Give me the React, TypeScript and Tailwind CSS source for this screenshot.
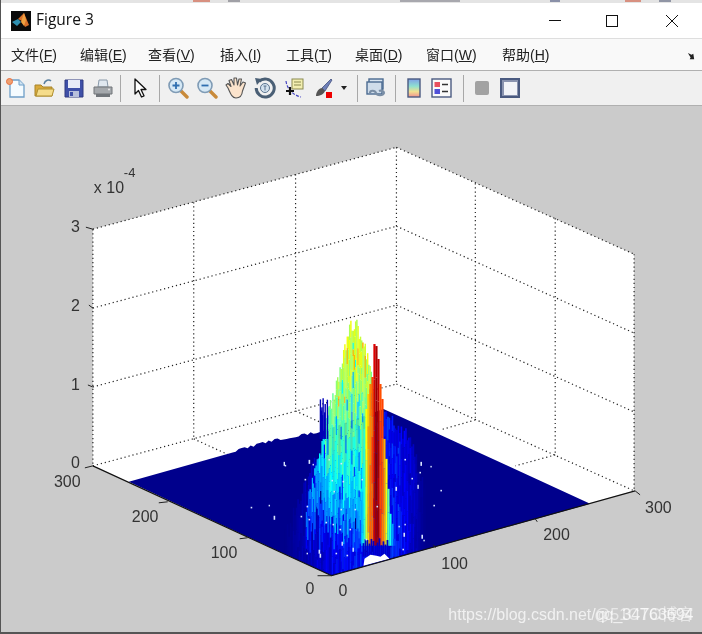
import React from "react";

let seed = 12345;
const rnd = () => {
  seed = (seed * 1664525 + 1013904223) % 4294967296;
  return seed / 4294967296;
};

const jet = (t0: number) => {
  const t = Math.max(0, Math.min(1, t0));
  const c = (v: number) => Math.round(255 * Math.max(0, Math.min(1, v)));
  const r = 1.5 - Math.abs(4 * t - 3);
  const g = 1.5 - Math.abs(4 * t - 2);
  const b = 1.5 - Math.abs(4 * t - 1);
  return `rgb(${c(r)},${c(g)},${c(b)})`;
};

const lerp = (pts: number[][], x: number) => {
  if (x <= pts[0][0]) return pts[0][1];
  for (let i = 1; i < pts.length; i++) {
    if (x <= pts[i][0]) {
      const [a, b] = pts[i - 1];
      const [c, d] = pts[i];
      return b + ((d - b) * (x - a)) / (c - a);
    }
  }
  return pts[pts.length - 1][1];
};

const frontEdge = (x: number) =>
  x < 331 ? 467 + (x - 92) * 0.46 : 577 - (x - 331) * 0.28;

type Seg = { x: number; y1: number; y2: number; c: string; w: number };
const buildSegs = () => {
  const segs: Seg[] = [];
  const glowTop = [[285, 530], [300, 490], [312, 462], [322, 445], [345, 430], [383, 410], [400, 420], [412, 440], [424, 475]];
  for (let x = 284; x < 426; x += 1.5) {
    const top = lerp(glowTop, x) + rnd() * 18;
    const bot = frontEdge(x) - 1;
    const fade = x < 350 ? (x - 284) / 66 : x > 398 ? (426 - x) / 28 : 1;
    let y = top;
    while (y < bot) {
      const len = 6 + rnd() * 22;
      const t = 0.01 + fade * (0.08 + rnd() * 0.1);
      segs.push({ x, y1: y, y2: Math.min(y + len, bot), c: jet(t), w: 1.6 });
      y += len;
    }
  }
  const bodyTop = [[306, 500], [313, 470], [320, 445], [327, 410], [337, 377], [345, 340], [350, 318], [353, 325], [356, 317], [360, 335], [363, 330], [366, 350], [370, 363], [374, 390]];
  const colY = [[317, 0.6], [360, 0.56], [400, 0.5], [440, 0.44], [480, 0.36], [520, 0.25], [560, 0.12]];
  for (let x = 306; x < 374; x += 1.2) {
    let y = lerp(bodyTop, x) + rnd() * 14;
    const bot = x < 352 ? 505 + rnd() * 50 : 553;
    while (y < bot) {
      const len = 5 + rnd() * 20;
      let t = lerp(colY, y) + (rnd() - 0.5) * 0.1;
      if (y < 400 && rnd() < 0.06) t = 0.7;
      if (x < 325) t -= 0.08;
      if (rnd() < 0.06) t -= 0.2;
      segs.push({ x, y1: y, y2: Math.min(y + len, bot), c: jet(t), w: 1.5 });
      y += len;
    }
  }
  for (let i = 0; i < 10; i++) {
    const x = 319 + rnd() * 9;
    segs.push({ x, y1: 397 + rnd() * 22, y2: 440, c: "#0000b8", w: 1.4 });
  }
  const ridge = [[362, 470, 0.34], [364, 430, 0.42], [366, 410, 0.6], [368, 395, 0.7], [370, 385, 0.76], [372, 378, 0.8], [374, 345, 0.92], [376, 347, 0.98], [378, 360, 0.95], [380, 385, 0.82], [382, 400, 0.78], [384, 440, 0.72], [386, 460, 0.6], [388, 490, 0.46], [390, 515, 0.38], [392, 525, 0.3], [394, 540, 0.2]];
  for (const [x, top, t] of ridge) {
    let y = top;
    while (y < 547) {
      const len = 18 + rnd() * 40;
      segs.push({ x, y1: y, y2: Math.min(y + len, 547), c: jet(t + (rnd() - 0.5) * 0.06), w: 2.2 });
      y += len;
    }
  }
  for (let x = 363; x < 391; x += 2) {
    segs.push({ x, y1: 538 + rnd() * 10, y2: 558, c: "#0000c8", w: 1.8 });
  }
  return segs;
};
const SEGS = buildSegs();

const DOTS = [
  [283, 463], [284, 466], [250, 508], [268, 506], [273, 517], [306, 507], [333, 492], [308, 520], [318, 551], [306, 554], [335, 554], [346, 556], [352, 549], [340, 464], [304, 480], [312, 465], [308, 461], [325, 523], [331, 481], [404, 460], [420, 463], [430, 467], [419, 473], [411, 479], [417, 486], [440, 491], [433, 506], [404, 525], [421, 536], [402, 550], [423, 541], [376, 507], [403, 534], [340, 510], [339, 530], [332, 525], [341, 543], [300, 517], [342, 482], [328, 460], [319, 555], [349, 530], [354, 510], [398, 527], [395, 488], [361, 480], [365, 540],
];

const GRID = [
  "M92 230 L396 148", "M92 309 L396 227", "M92 388 L396 306", "M92 467 L396 385",
  "M396 148 L634 255", "M396 227 L634 334", "M396 306 L634 413", "M396 385 L634 492",
  "M92 230 L92 467", "M193 203 L193 440", "M295 175 L295 412", "M396 148 L396 385",
  "M475 184 L475 421", "M555 219 L555 456", "M634 255 L634 492",
  "M193 440 L252 467", "M295 412 L330 428", "M475 421 L440 431", "M555 456 L515 467",
];

const EDGE_PTS = (() => {
  const pts: string[] = ["128,483"];
  for (let x = 232; x < 318; x += 3) {
    const base = x < 270 ? 483 - (x - 128) * 0.282 : 443 - (x - 270) * 0.19;
    pts.push(`${x},${(base - (rnd() < 0.4 ? 2 : 0)).toFixed(1)}`);
  }
  return pts.join(" ");
})();

const Label = ({ x, y, children, size = 16 }: { x: number; y: number; children: React.ReactNode; size?: number }) => (
  <text x={x} y={y} fontSize={size} fill="#333" fontFamily="'Liberation Sans', Arial, sans-serif">{children}</text>
);

const Plot = () => (
  <svg viewBox="0 107 702 525" className="block h-[525px] w-[701px]">
    <polygon points="92,230 396,148 634,255 634,492 331,577 92,467" fill="#ffffff" />
    {GRID.map((d) => (
      <path key={d} d={d} stroke="#222" strokeWidth="1.2" strokeDasharray="1.2 2.9" fill="none" />
    ))}
    <polygon points={`${EDGE_PTS} 383,410 427,430 590,505 331,577`} fill="#00008c" />
    {SEGS.map((s, i) => (
      <line key={i} x1={s.x} x2={s.x} y1={s.y1} y2={s.y2} stroke={s.c} strokeWidth={s.w} />
    ))}
    <polygon points="363,567 389,560 384,555 380,558 376,557 370,556 364,560" fill="#ffffff" />
    {DOTS.map(([x, y], i) => (
      <rect key={i} x={x} y={y} width={i % 3 === 0 ? 1.4 : 1.6} height={i % 4 === 0 ? 4 : 1.6} fill="#d8e4ff" />
    ))}
    <path d="M92 467 L331 577 L635 492" stroke="#111" strokeWidth="1.2" fill="none" />
    <path d="M331 577 L317 577 M167 503 L158 504 M247 539 L239 540 M92 467 L84 469 M435 549 L433 546 M537 523 L535 520 M635 492 L640 496 M92 388 L87 386 M92 309 L88 306 M92 230 L85 228" stroke="#222" strokeWidth="1" fill="none" />
    <Label x={93} y={194}>x 10</Label>
    <Label x={123} y={178} size={13}>-4</Label>
    <Label x={70} y={233}>3</Label>
    <Label x={70} y={312}>2</Label>
    <Label x={70} y={391}>1</Label>
    <Label x={70} y={469}>0</Label>
    <Label x={53} y={488}>300</Label>
    <Label x={131} y={523}>200</Label>
    <Label x={210} y={559}>100</Label>
    <Label x={305} y={595}>0</Label>
    <Label x={338} y={597}>0</Label>
    <Label x={441} y={570}>100</Label>
    <Label x={543} y={541}>200</Label>
    <Label x={645} y={514}>300</Label>
    <text x={448} y={621} fontSize={16} fill="#fff" opacity={0.72} fontFamily="'Liberation Sans', sans-serif">https://blog.csdn.net/qq_34763694</text>
    <text x={594} y={621} fontSize={16} fill="#fff" opacity={0.55} fontFamily="'Liberation Sans', 'Noto Sans CJK SC', sans-serif">@51CTO博客</text>
  </svg>
);

const Ic = ({ className, children }: { className: string; children: React.ReactNode }) => (
  <svg viewBox="0 0 22 22" className={`block h-[22px] w-[22px] shrink-0 ${className}`}>{children}</svg>
);

const Sep = ({ className }: { className: string }) => <div className={`h-[27px] w-px shrink-0 bg-[#a8a8a8] ${className}`} />;

const Lens = ({ sign }: { sign: "+" | "-" }) => (
  <>
    <path d="M13 13 L20 20" stroke="#c88a3a" strokeWidth="3.4" strokeLinecap="round" />
    <circle cx="9" cy="8.5" r="7" fill="#d5e8f5" stroke="#7f9bb5" strokeWidth="1.6" />
    <path d={sign === "+" ? "M5.5 8.5H12.5M9 5V12" : "M5.5 8.5H12.5"} stroke="#2f6fb0" strokeWidth="1.8" />
  </>
);

const MENU: [string, string][] = [
  ["文件", "F"], ["编辑", "E"], ["查看", "V"], ["插入", "I"], ["工具", "T"], ["桌面", "D"], ["窗口", "W"], ["帮助", "H"],
];

const MENU_W = ["w-[69px]", "w-[68px]", "w-[72px]", "w-[66px]", "w-[69px]", "w-[71px]", "w-[76px]", "w-[60px]"];

export default function App() {
  return (
    <div className="flex h-[634px] w-[702px] flex-col overflow-hidden border-l border-[#555] bg-white blur-[0.4px]" style={{ fontFamily: "'Liberation Sans', 'Noto Sans CJK SC', sans-serif" }}>
      {/* sliver of the window behind */}
      <div className="flex h-[3px] shrink-0 items-start bg-[#e4e4e4]">
        <div className="ml-[192px] h-[2px] w-[17px] bg-[#d89080]" />
        <div className="ml-[18px] h-[2px] w-[12px] bg-[#a0a0a6]" />
        <div className="ml-[160px] h-[2px] w-[60px] bg-[#a8a8ae]" />
        <div className="ml-[90px] h-[2px] w-[10px] bg-[#8a90a8]" />
        <div className="ml-[65px] h-[2px] w-[16px] bg-[#d89080]" />
        <div className="ml-[18px] h-[2px] w-[12px] bg-[#9095a5]" />
      </div>

      {/* title bar */}
      <div className="flex h-[36px] shrink-0 items-center border-b border-[#dedede] bg-white">
        <svg viewBox="0 0 20 20" className="ml-[10px] h-[20px] w-[20px] shrink-0">
          <rect width="20" height="20" fill="#0a0a0a" />
          <path d="M1 11 L7 8 L10 11 L6 15Z" fill="#2f8fb0" />
          <path d="M7 8 L13 2 L18 14 L14 16 L11 10Z" fill="#d9702a" />
          <path d="M13 2 L15 9 L13 15 L10 11Z" fill="#f0a040" />
        </svg>
        <span className="mb-[1px] ml-[5px] text-[15.5px] text-[#111]" style={{ fontFamily: "'Open Sans', sans-serif" }}>Figure 3</span>
        <div className="ml-auto mr-[24px] flex items-center">
          <div className="h-px w-[12px] bg-[#111]" />
          <div className="ml-[45px] h-[12px] w-[12px] border border-[#111]" />
          <svg viewBox="0 0 12 12" className="ml-[48px] h-[12px] w-[12px]"><path d="M0 0L12 12M12 0L0 12" stroke="#111" strokeWidth="1" /></svg>
        </div>
      </div>

      {/* menu bar */}
      <div className="flex h-[31px] shrink-0 items-center bg-[#f9f9f9] pl-[10px] pt-[1px] text-[14px] text-[#222]">
        {MENU.map(([t, k], i) => (
          <span key={k} className={`${MENU_W[i]} whitespace-nowrap`}>{t}(<span className="underline">{k}</span>)</span>
        ))}
        <svg viewBox="0 0 10 10" className="ml-auto mr-[6px] mt-[2px] h-[9px] w-[9px]"><path d="M1 1 L5 3 L7 2 L8 8 L3 8 L4 6 Z" fill="#222" /></svg>
      </div>

      {/* toolbar */}
      <div className="flex h-[36px] shrink-0 items-center border-y border-[#b0b0b0] bg-[#f0f0f0] pl-[3px]">
        <Ic className="ml-[1px]">
          <path d="M5 3H14L19 8V20H5Z" fill="#f4fbff" stroke="#6f9fc8" strokeWidth="1.3" />
          <path d="M14 3V8H19" fill="#cfe3f2" stroke="#6f9fc8" />
          <circle cx="4.5" cy="4.5" r="3" fill="#f0a070" stroke="#e87040" />
        </Ic>
        <Ic className="ml-[6px]">
          <path d="M2 19V8H8L10 10H19V19Z" fill="#d8a93c" stroke="#a88428" />
          <path d="M3 19L5 12H21L19 19Z" fill="#f5dc8a" stroke="#b09030" />
          <path d="M11 7C12 3 16 2 18 4" stroke="#5a7f9f" strokeWidth="1.5" fill="none" />
        </Ic>
        <Ic className="ml-[8px]">
          <path d="M2 3H20V20H2Z" fill="#3f50a8" stroke="#303a80" />
          <rect x="5" y="3" width="12" height="8" fill="#e8ecf8" />
          <rect x="6" y="14" width="10" height="6" fill="#b8c0dc" />
          <rect x="7" y="15" width="3" height="4" fill="#3f50a8" />
        </Ic>
        <Ic className="ml-[7px]">
          <path d="M7 3H15L16 10H6Z" fill="#e0e8f0" stroke="#8a9aaa" />
          <path d="M2 10H20V17H2Z" fill="#a4a8ac" stroke="#707478" />
          <path d="M4 17H18V20H4Z" fill="#70757a" />
          <circle cx="17" cy="12.5" r="1" fill="#e8e8e8" />
        </Ic>
        <Sep className="ml-[6px]" />
        <Ic className="ml-[8px]">
          <path d="M6 2V17L9.5 13.5L12.5 20L15 18.8L12 12.5H17Z" fill="#fff" stroke="#111" strokeWidth="1.3" strokeLinejoin="round" />
        </Ic>
        <Sep className="ml-[8px]" />
        <Ic className="ml-[7px]"><Lens sign="+" /></Ic>
        <Ic className="ml-[7px]"><Lens sign="-" /></Ic>
        <Ic className="ml-[7px]">
          <path d="M3 11L1 8L3 6.5L6 9.5L4 3.5L6.5 2.5L9 8L9 1H11.5L12.5 8L14 2H16.5L15 9L18 5L20.5 6L17.5 14C17 19 14.5 21 11 21C7.5 21 6 18 3 11Z" fill="#fbe3cc" stroke="#555" strokeWidth="1.1" strokeLinejoin="round" />
        </Ic>
        <Ic className="ml-[7px]">
          <path d="M5 4.5A9 9 0 1 1 2.2 11" fill="none" stroke="#4a5f75" strokeWidth="3" />
          <path d="M1 1L8 2L3 8Z" fill="#4a5f75" />
          <circle cx="11" cy="11" r="4.5" fill="#d5e3ef" stroke="#5c7590" />
          <path d="M9.5 9H12.5M11 9V13.5" stroke="#5c7590" />
        </Ic>
        <Ic className="ml-[7px]">
          <path d="M3 4C4 12 10 18 18 20" fill="none" stroke="#4040c0" strokeWidth="1.2" strokeDasharray="3 1.5" />
          <rect x="9" y="2" width="11" height="10" fill="#f2eeb0" stroke="#8a8a50" />
          <path d="M11 5H18M11 8H18" stroke="#8a8a50" />
          <path d="M7 10V18M3 14H11" stroke="#111" strokeWidth="2.2" />
        </Ic>
        <Ic className="ml-[7px]">
          <path d="M10 11L19 2L20 3L13 14Z" fill="#6f80b8" stroke="#44507f" strokeWidth=".8" />
          <path d="M4 19C4 15 7 11 10 11L13 14C12 17 8 19 4 19Z" fill="#555" />
          <rect x="14" y="15" width="6" height="6" fill="#ee0000" />
        </Ic>
        <svg viewBox="0 0 6 4" className="ml-[7px] h-[4px] w-[6px] shrink-0"><path d="M0 0H6L3 4Z" fill="#222" /></svg>
        <Sep className="ml-[10px]" />
        <Ic className="ml-[7px]">
          <rect x="4" y="2" width="14" height="10" fill="#d8e4f0" stroke="#4a6a90" strokeWidth="1.4" />
          <rect x="2" y="5" width="15" height="12" fill="#cfdcea" stroke="#4a6a90" strokeWidth="1.4" />
          <path d="M5 16C5 13 10 13 11 16C12 19 18 19 19 16C19 14 16 13 14 14" fill="none" stroke="#7a8ea5" strokeWidth="2.2" />
        </Ic>
        <Sep className="ml-[8px]" />
        <svg viewBox="0 0 14 20" className="ml-[11px] h-[20px] w-[14px] shrink-0">
          <defs>
            <linearGradient id="cb" x1="0" x2="0" y1="0" y2="1">
              <stop offset="0" stopColor="#7f9fe8" /><stop offset=".4" stopColor="#8fe0d0" /><stop offset=".7" stopColor="#f0e090" /><stop offset="1" stopColor="#f09090" />
            </linearGradient>
          </defs>
          <rect x="1" y="1" width="12" height="18" fill="url(#cb)" stroke="#4a5a80" strokeWidth="1.4" />
        </svg>
        <Ic className="ml-[10px]">
          <rect x="1" y="2" width="19" height="18" fill="#fafafa" stroke="#4a5a80" strokeWidth="1.4" />
          <rect x="3.5" y="5" width="5.5" height="5" fill="#e85060" />
          <rect x="3.5" y="12" width="5.5" height="5" fill="#5050d8" />
          <path d="M11 7.5H17M11 14.5H17" stroke="#333" strokeWidth="1.4" />
        </Ic>
        <Sep className="ml-[10px]" />
        <div className="ml-[11px] h-[14px] w-[14px] shrink-0 rounded-[2px] bg-[#a2a2a2]" />
        <div className="ml-[11px] flex h-[20px] w-[20px] shrink-0 items-center justify-center border-2 border-[#4a5a80] bg-[#8a94b0]">
          <div className="h-[13px] w-[13px] bg-[#f2f4f8]" />
        </div>
      </div>

      {/* figure area */}
      <div className="flex-1 border-b-2 border-[#555] bg-[#cbcbcb]">
        <Plot />
      </div>
    </div>
  );
}
